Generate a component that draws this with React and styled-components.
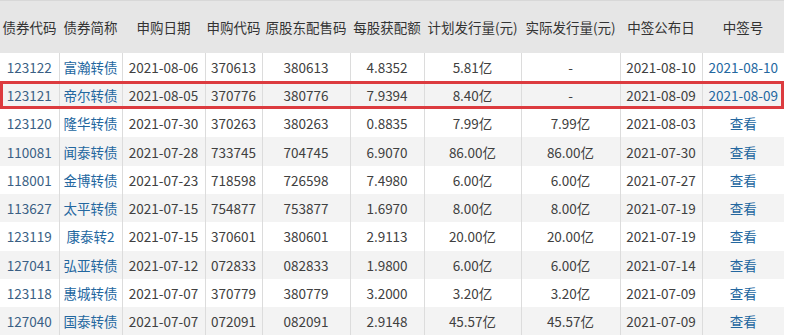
import React from 'react';
import styled, { createGlobalStyle } from 'styled-components';

const GlobalStyle = createGlobalStyle`
  html, body {
    margin: 0;
    padding: 0;
    background: #ffffff;
  }
  body {
    font-family: "Noto Sans CJK SC", "Noto Sans", sans-serif;
  }
`;

const Page = styled.div`
  width: 786px;
  height: 335px;
  overflow: hidden;
  background: #ffffff;
`;

const Table = styled.table`
  width: 784px;
  table-layout: fixed;
  border-collapse: collapse;
  font-size: 13.5px;
  color: #333;
`;

const HeadRow = styled.tr`
  height: 52px;
  background: #e6e6e6;
`;

const Th = styled.th`
  font-weight: normal;
  color: #333;
  text-align: center;
  padding: 0;
  white-space: nowrap;
  border-top: 1px solid #d8d8d8;
`;

const Row = styled.tr`
  height: 28.3px;
  background: ${(p) => (p.$striped ? '#f3f3f3' : '#ffffff')};
  outline: ${(p) => (p.$marked ? '3px solid #dc3b3f' : 'none')};
  outline-offset: -3px;
`;

const Td = styled.td`
  padding: 0;
  text-align: center;
  white-space: nowrap;
  border-left: 1px solid #dcdcdc;
  color: ${(p) => p.$color || '#404040'};
  &:first-child {
    border-left: none;
  }
`;

const widths = [59, 63, 83, 57, 88, 74, 97, 99, 82, 82];

const heads = [
  '债券代码', '债券简称', '申购日期', '申购代码', '原股东配售码',
  '每股获配额', '计划发行量(元)', '实际发行量(元)', '中签公布日', '中签号',
];

const rows = [
  ['123122', '富瀚转债', '2021-08-06', '370613', '380613', '4.8352', '5.81亿', '-', '2021-08-10', '2021-08-10'],
  ['123121', '帝尔转债', '2021-08-05', '370776', '380776', '7.9394', '8.40亿', '-', '2021-08-09', '2021-08-09'],
  ['123120', '隆华转债', '2021-07-30', '370263', '380263', '0.8835', '7.99亿', '7.99亿', '2021-08-03', '查看'],
  ['110081', '闻泰转债', '2021-07-28', '733745', '704745', '6.9070', '86.00亿', '86.00亿', '2021-07-30', '查看'],
  ['118001', '金博转债', '2021-07-23', '718598', '726598', '7.4980', '6.00亿', '6.00亿', '2021-07-27', '查看'],
  ['113627', '太平转债', '2021-07-15', '754877', '753877', '1.6970', '8.00亿', '8.00亿', '2021-07-19', '查看'],
  ['123119', '康泰转2', '2021-07-15', '370601', '380601', '2.9113', '20.00亿', '20.00亿', '2021-07-19', '查看'],
  ['127041', '弘亚转债', '2021-07-12', '072833', '082833', '1.9800', '6.00亿', '6.00亿', '2021-07-14', '查看'],
  ['123118', '惠城转债', '2021-07-07', '370779', '380779', '3.2000', '3.20亿', '3.20亿', '2021-07-09', '查看'],
  ['127040', '国泰转债', '2021-07-07', '072091', '082091', '2.9148', '45.57亿', '45.57亿', '2021-07-09', '查看'],
];

const colColor = (i) => {
  if (i === 0) return '#3a5f84';
  if (i === 1 || i === 9) return '#23679f';
  return '#404040';
};

const App = () => (
  <Page>
    <GlobalStyle />
    <Table>
      <colgroup>
        {widths.map((w, i) => (
          <col key={i} style={{ width: w }} />
        ))}
      </colgroup>
      <thead>
        <HeadRow>
          {heads.map((h) => (
            <Th key={h}>{h}</Th>
          ))}
        </HeadRow>
      </thead>
      <tbody>
        {rows.map((r, ri) => (
          <Row key={r[0]} $striped={ri % 2 === 1} $marked={ri === 1}>
            {r.map((c, ci) => (
              <Td key={ci} $color={colColor(ci)}>{c}</Td>
            ))}
          </Row>
        ))}
      </tbody>
    </Table>
  </Page>
);

export default App;
